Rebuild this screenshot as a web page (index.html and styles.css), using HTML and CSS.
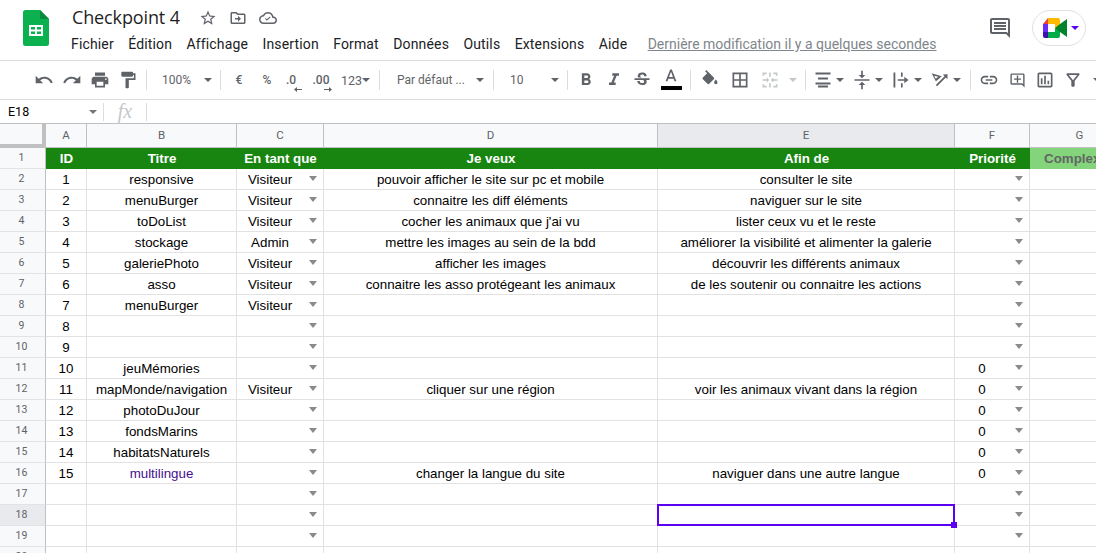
FILE: index.html
```html
<!DOCTYPE html>
<html lang="fr">
<head>
<meta charset="utf-8">
<title>Checkpoint 4</title>
<link rel="stylesheet" href="styles.css">
</head>
<body>
<header class="topbar">
  <svg class="logo" viewBox="0 0 26 36"><path fill="#0bb04f" d="M2.5 0H17l9 9v24.500a2.500 2.500 0 0 1-2.500 2.500h-21A2.500 2.500 0 0 1 0 33.500v-31A2.500 2.500 0 0 1 2.500 0z"/><path fill="#0a8a3f" d="M17 0l9 9h-9z"/><path fill="#fff" d="M6 15h14v11H6zm2 2v2.500h4V17zm6 0v2.500h4V17zM8 21.500V24h4v-2.500zm6 0V24h4v-2.500z"/></svg>
  <div class="docinfo">
    <div class="titlerow">
      <span class="doctitle">Checkpoint 4</span>
      <svg class="ic18" viewBox="0 0 24 24"><path d="M22 9.240l-7.190-.62L12 2 9.190 8.630 2 9.240l5.460 4.730L5.820 21 12 17.270 18.180 21l-1.630-7.030L22 9.240zM12 15.400l-3.760 2.270 1-4.280-3.320-2.880 4.380-.38L12 6.100l1.710 4.040 4.380.38-3.320 2.880 1 4.280L12 15.400z"/></svg>
      <svg class="ic18" viewBox="0 0 24 24"><path d="M20 6h-8l-2-2H4c-1.100 0-2 .9-2 2v12c0 1.100.9 2 2 2h16c1.100 0 2-.9 2-2V8c0-1.100-.9-2-2-2zm0 12H4V6h5.170l2 2H20v10zM12 17l4-4-4-4v3H8v2h4z"/></svg>
      <svg class="ic18" viewBox="0 0 24 24"><path d="M19.350 10.040C18.670 6.590 15.640 4 12 4 9.110 4 6.600 5.640 5.350 8.040 2.340 8.360 0 10.910 0 14c0 3.310 2.690 6 6 6h13c2.760 0 5-2.240 5-5 0-2.640-2.050-4.780-4.650-4.960zM19 18H6c-2.210 0-4-1.790-4-4 0-2.050 1.530-3.760 3.560-3.970l1.070-.11.5-.95C8.080 7.140 9.940 6 12 6c2.620 0 4.880 1.860 5.390 4.430l.3 1.500 1.530.11c1.560.1 2.780 1.410 2.780 2.960 0 1.650-1.350 3-3 3zm-8.500-2.500L8 13l1-1 1.500 1.500L14.500 10l1 1z"/></svg>
    </div>
    <nav class="menu">
      <span>Fichier</span><span>Édition</span><span>Affichage</span><span>Insertion</span><span>Format</span><span>Données</span><span>Outils</span><span>Extensions</span><span>Aide</span>
      <a class="lastedit">Dernière modification il y a quelques secondes</a>
    </nav>
  </div>
  <svg class="chat" viewBox="0 0 24 24"><path d="M21.990 4c0-1.100-.89-2-1.990-2H4c-1.100 0-2 .9-2 2v12c0 1.100.9 2 2 2h14l4 4-.01-18zM20 4v13.170L18.830 16H4V4h16zM6 12h12v2H6zm0-3h12v2H6zm0-3h12v2H6z"/></svg>
  <div class="meet">
    <svg class="meetlogo" viewBox="0 0 24 20"><path fill="#00ac47" d="M5 14h7v-4h5v8a2 2 0 0 1-2 2H5z"/><path fill="#ffba00" d="M5 0h10a2 2 0 0 1 2 2v8h-5V6H5z"/><path fill="#6a2cf5" d="M0 6h5v8H0z"/><path fill="#3f10b5" d="M0 14h5v6H2a2 2 0 0 1-2-2z"/><path fill="#ea4335" d="M5 0v6H0z"/><path fill="#00832d" d="M12 10l5-4 7-5v18l-7-5z"/></svg>
    <span class="meetarrow"></span>
  </div>
</header>

<div class="toolbar">
  <span class="b"><svg class="ic" viewBox="0 0 24 24"><path d="M12.500 8c-2.650 0-5.050.99-6.900 2.600L2 7v9h9l-3.620-3.620c1.390-1.160 3.160-1.880 5.120-1.880 3.540 0 6.550 2.310 7.600 5.500l2.370-.78C21.080 11.030 17.150 8 12.500 8z"/></svg></span>
  <span class="b"><svg class="ic" viewBox="0 0 24 24"><path d="M18.400 10.600C16.550 8.990 14.150 8 11.500 8c-4.650 0-8.580 3.030-9.960 7.220L3.900 16c1.050-3.190 4.050-5.500 7.600-5.500 1.950 0 3.730.72 5.120 1.880L13 16h9V7l-3.600 3.600z"/></svg></span>
  <span class="b"><svg class="ic" viewBox="0 0 24 24"><path d="M19 8H5c-1.660 0-3 1.340-3 3v6h4v4h12v-4h4v-6c0-1.660-1.340-3-3-3zm-3 11H8v-5h8v5zm3-7c-.55 0-1-.45-1-1s.45-1 1-1 1 .45 1 1-.45 1-1 1zm-1-9H6v4h12V3z"/></svg></span>
  <span class="b"><svg class="ic" viewBox="0 0 24 24"><path d="M18 4V3c0-.55-.45-1-1-1H5c-.55 0-1 .45-1 1v4c0 .55.45 1 1 1h12c.55 0 1-.45 1-1V6h1v4H9v11c0 .55.45 1 1 1h2c.55 0 1-.45 1-1v-9h8V4h-3z"/></svg></span>
  <i class="sep"></i>
  <span class="sel zoomsel"><span>100%</span><i class="arr"></i></span>
  <i class="sep"></i>
  <span class="b txt">€</span>
  <span class="b txt">%</span>
  <span class="dec dec1"><span>.0</span><svg viewBox="0 0 8 5"><path d="M0 2.500L3 0v2h5v1H3v2z"/></svg></span>
  <span class="dec dec2"><span>.00</span><svg viewBox="0 0 8 5"><path d="M8 2.500L5 0v2H0v1h5v2z"/></svg></span>
  <span class="sel numsel"><span>123</span><i class="arr"></i></span>
  <i class="sep"></i>
  <span class="sel fontsel"><span>Par défaut ...</span><i class="arr"></i></span>
  <i class="sep"></i>
  <span class="sel sizesel"><span>10</span><i class="arr"></i></span>
  <i class="sep"></i>
  <span class="b"><svg class="ic" viewBox="0 0 24 24"><path d="M15.600 10.790c.97-.67 1.650-1.770 1.650-2.790 0-2.260-1.750-4-4-4H7v14h7.040c2.090 0 3.710-1.700 3.710-3.790 0-1.520-.86-2.820-2.150-3.420zM10 6.500h3c.83 0 1.500.67 1.500 1.500s-.67 1.500-1.500 1.500h-3v-3zm3.500 9H10v-3h3.500c.83 0 1.500.67 1.500 1.500s-.67 1.500-1.500 1.500z"/></svg></span>
  <span class="b"><svg class="ic" viewBox="0 0 24 24"><path d="M10 4v3h2.210l-3.420 8H6v3h8v-3h-2.210l3.420-8H18V4z"/></svg></span>
  <span class="b"><svg class="ic" viewBox="0 0 24 24"><path d="M6.850 7.080C6.850 4.370 9.450 3 12.240 3c1.640 0 3 .49 3.900 1.280.77.65 1.460 1.730 1.460 3.240h-3.010c0-.31-.05-.59-.15-.85-.29-.86-1.200-1.280-2.250-1.280-1.860 0-2.340 1.020-2.340 1.700 0 .48.25.88.74 1.210.38.25.77.48 1.410.7H7.390c-.21-.34-.54-.89-.54-1.920zM21 12v-2H3v2h9.620c1.150.45 1.960.75 1.960 1.970 0 1-.81 1.670-2.280 1.670-1.540 0-2.930-.54-2.930-2.510H6.400c0 .55.08 1.130.24 1.580.81 2.290 3.290 3.300 5.670 3.300 2.270 0 5.300-.89 5.300-4.050 0-.3-.01-1.160-.48-1.940H21V12z"/></svg></span>
  <span class="b wide colorbtn"><svg class="ic" viewBox="0 0 24 24"><path d="M11 3L5.500 17h2.250l1.120-3h6.250l1.120 3h2.250L13 3h-2zm-1.380 9L12 5.670 14.380 12H9.620z"/></svg><i class="colorbar"></i></span>
  <i class="sep"></i>
  <span class="b wide"><svg class="ic" viewBox="0 0 24 24"><path d="M16.560 8.940L7.620 0 6.210 1.410l2.380 2.380-5.150 5.150c-.59.59-.59 1.540 0 2.120l5.500 5.500c.29.29.68.44 1.060.44s.77-.15 1.060-.44l5.500-5.500c.59-.58.59-1.530 0-2.120zM19 11.500s-2 2.170-2 3.500c0 1.100.9 2 2 2s2-.9 2-2c0-1.330-2-3.500-2-3.500z"/></svg></span>
  <span class="b wide"><svg class="ic" viewBox="0 0 24 24"><path d="M3 3v18h18V3H3zm8 16H5v-6h6v6zm0-8H5V5h6v6zm8 8h-6v-6h6v6zm0-8h-6V5h6v6z"/></svg></span>
  <span class="b wide dim"><svg class="ic" viewBox="0 0 24 24"><path d="M3 3h5v2H5v2H3zm13 0h5v4h-2V5h-3zM3 17h2v2h3v2H3zm16 0h2v4h-5v-2h3zM11 3h2v5h-2zm0 13h2v5h-2zM3 11h5V9l3 3-3 3v-2H3zm18 0h-5V9l-3 3 3 3v-2h5z"/></svg></span>
  <span class="loosearr"><i class="arr off"></i></span>
  <i class="sep"></i>
  <span class="ba"><svg class="ic" viewBox="0 0 24 24"><path d="M3 3h18v2.500H3zm3 6h12v2.500H6zm-3 6h18v2.500H3zm3 3.500h12V21H6z"/></svg><i class="arr"></i></span>
  <span class="ba"><svg class="ic" viewBox="0 0 24 24"><path d="M3 11h18v2H3zm9-1L8 6h3V1h2v5h3zm0 4l4 4h-3v5h-2v-5H8z"/></svg><i class="arr"></i></span>
  <span class="ba"><svg class="ic" viewBox="0 0 24 24"><path d="M3 3h2.200v18H3zm9 0h2v5h-2zm0 13h2v5h-2zM8 11h8V8l5 4-5 4v-3H8z"/></svg><i class="arr"></i></span>
  <span class="ba"><svg class="ic" viewBox="0 0 24 24"><path d="M2 4l12 3.500L9 12l-2 1.500zm3 3l1.800 3.500L10 8zM21 5v6l-2-2L8.500 19.500 7 18 17.500 7.500l-2-2z"/></svg><i class="arr"></i></span>
  <i class="sep"></i>
  <span class="b"><svg class="ic" viewBox="0 0 24 24"><path d="M3.900 12c0-1.710 1.390-3.100 3.100-3.100h4V7H7c-2.760 0-5 2.240-5 5s2.240 5 5 5h4v-1.900H7c-1.710 0-3.100-1.390-3.100-3.100zM8 13h8v-2H8v2zm9-6h-4v1.900h4c1.710 0 3.100 1.390 3.100 3.100s-1.390 3.100-3.100 3.100h-4V17h4c2.760 0 5-2.240 5-5s-2.240-5-5-5z"/></svg></span>
  <span class="b"><svg class="ic small" viewBox="0 0 24 24"><path d="M22 4c0-1.100-.9-2-2-2H4c-1.100 0-2 .9-2 2v12c0 1.100.9 2 2 2h14l4 4V4zm-2 13.170L18.830 16H4V4h16v13.170zM13 5h-2v4H7v2h4v4h2v-4h4V9h-4z"/></svg></span>
  <span class="b"><svg class="ic" viewBox="0 0 24 24"><path d="M19 3H5c-1.100 0-2 .9-2 2v14c0 1.100.9 2 2 2h14c1.100 0 2-.9 2-2V5c0-1.100-.9-2-2-2zm0 16H5V5h14v14zM7 10h2v7H7zm4-3h2v10h-2zm4 6h2v4h-2z"/></svg></span>
  <span class="b"><svg class="ic" viewBox="0 0 24 24"><path d="M7 6h10l-5.010 6.300L7 6zm-2.750-.39C6.270 8.200 10 13 10 13v6c0 .55.45 1 1 1h2c.55 0 1-.45 1-1v-6s3.720-4.800 5.740-7.390c.51-.66.04-1.610-.79-1.610H5.040c-.83 0-1.300.95-.79 1.610z"/></svg></span>
  <span class="loosearr last"><i class="arr"></i></span>
</div>

<div class="formulabar">
  <span class="namebox">E18</span>
  <i class="arr"></i>
  <i class="fsep"></i>
  <span class="fx">fx</span>
  <i class="fsep"></i>
</div>

<main class="sheet">
  <div class="corner"></div>
  <div class="ch">A</div><div class="ch">B</div><div class="ch">C</div><div class="ch">D</div><div class="ch on">E</div><div class="ch">F</div><div class="ch">G</div>

  <div class="rh">1</div><div class="h">ID</div><div class="h">Titre</div><div class="h">En tant que</div><div class="h">Je veux</div><div class="h">Afin de</div><div class="h">Priorité</div><div class="h soft">Complexité</div>

  <div class="rh">2</div><div class="c">1</div><div class="c">responsive</div><div class="c dd">Visiteur</div><div class="c">pouvoir afficher le site sur pc et mobile</div><div class="c">consulter le site</div><div class="c dd"></div><div class="c"></div>
  <div class="rh">3</div><div class="c">2</div><div class="c">menuBurger</div><div class="c dd">Visiteur</div><div class="c">connaitre les diff éléments</div><div class="c">naviguer sur le site</div><div class="c dd"></div><div class="c"></div>
  <div class="rh">4</div><div class="c">3</div><div class="c">toDoList</div><div class="c dd">Visiteur</div><div class="c">cocher les animaux que j'ai vu</div><div class="c">lister ceux vu et le reste</div><div class="c dd"></div><div class="c"></div>
  <div class="rh">5</div><div class="c">4</div><div class="c">stockage</div><div class="c dd">Admin</div><div class="c">mettre les images au sein de la bdd</div><div class="c">améliorer la visibilité et alimenter la galerie</div><div class="c dd"></div><div class="c"></div>
  <div class="rh">6</div><div class="c">5</div><div class="c">galeriePhoto</div><div class="c dd">Visiteur</div><div class="c">afficher les images</div><div class="c">découvrir les différents animaux</div><div class="c dd"></div><div class="c"></div>
  <div class="rh">7</div><div class="c">6</div><div class="c">asso</div><div class="c dd">Visiteur</div><div class="c">connaitre les asso protégeant les animaux</div><div class="c">de les soutenir ou connaitre les actions</div><div class="c dd"></div><div class="c"></div>
  <div class="rh">8</div><div class="c">7</div><div class="c">menuBurger</div><div class="c dd">Visiteur</div><div class="c"></div><div class="c"></div><div class="c dd"></div><div class="c"></div>
  <div class="rh">9</div><div class="c">8</div><div class="c"></div><div class="c dd"></div><div class="c"></div><div class="c"></div><div class="c dd"></div><div class="c"></div>
  <div class="rh">10</div><div class="c">9</div><div class="c"></div><div class="c dd"></div><div class="c"></div><div class="c"></div><div class="c dd"></div><div class="c"></div>
  <div class="rh">11</div><div class="c">10</div><div class="c">jeuMémories</div><div class="c dd"></div><div class="c"></div><div class="c"></div><div class="c dd">0</div><div class="c"></div>
  <div class="rh">12</div><div class="c">11</div><div class="c">mapMonde/navigation</div><div class="c dd">Visiteur</div><div class="c">cliquer sur une région</div><div class="c">voir les animaux vivant dans la région</div><div class="c dd">0</div><div class="c"></div>
  <div class="rh">13</div><div class="c">12</div><div class="c">photoDuJour</div><div class="c dd"></div><div class="c"></div><div class="c"></div><div class="c dd">0</div><div class="c"></div>
  <div class="rh">14</div><div class="c">13</div><div class="c">fondsMarins</div><div class="c dd"></div><div class="c"></div><div class="c"></div><div class="c dd">0</div><div class="c"></div>
  <div class="rh">15</div><div class="c">14</div><div class="c">habitatsNaturels</div><div class="c dd"></div><div class="c"></div><div class="c"></div><div class="c dd">0</div><div class="c"></div>
  <div class="rh">16</div><div class="c">15</div><div class="c purple">multilingue</div><div class="c dd"></div><div class="c">changer la langue du site</div><div class="c">naviguer dans une autre langue</div><div class="c dd">0</div><div class="c"></div>
  <div class="rh">17</div><div class="c"></div><div class="c"></div><div class="c dd"></div><div class="c"></div><div class="c"></div><div class="c dd"></div><div class="c"></div>
  <div class="rh on">18</div><div class="c"></div><div class="c"></div><div class="c dd"></div><div class="c"></div><div class="c active"><i class="handle"></i></div><div class="c dd"></div><div class="c"></div>
  <div class="rh">19</div><div class="c"></div><div class="c"></div><div class="c dd"></div><div class="c"></div><div class="c"></div><div class="c dd"></div><div class="c"></div>
  <div class="rh">20</div><div class="c"></div><div class="c"></div><div class="c"></div><div class="c"></div><div class="c"></div><div class="c"></div><div class="c"></div>
</main>
</body>
</html>
```

FILE: styles.css
```css
* { box-sizing: border-box; }
html, body { margin: 0; padding: 0; }
body {
  width: 1096px;
  height: 553px;
  overflow: hidden;
  background: #fff;
  font-family: Roboto, "Liberation Sans", sans-serif;
  color: #000;
}
svg { display: block; fill: #5f6368; flex: none; }

.topbar {
  height: 61px;
  border-bottom: 1px solid #dadce0;
  display: flex;
  align-items: flex-start;
  padding-left: 23px;
}
.logo { width: 26px; height: 36px; margin-top: 10px; }
.docinfo { margin-left: 22px; width: 917px; padding-top: 5px; }
.titlerow { display: flex; align-items: center; height: 25px; padding-left: 1px; }
.doctitle {
  font-family: "Open Sans", Roboto, sans-serif;
  font-size: 18px;
  line-height: 25px;
  color: #1f1f1f;
  margin-right: 19px;
  letter-spacing: -.13px;
}
.ic18 { width: 18px; height: 18px; margin-right: 12px; }
.menu {
  display: flex;
  gap: 14.400px;
  font-size: 14px;
  line-height: 20px;
  color: #202124;
  margin-top: 4px;
  letter-spacing: .15px;
  white-space: nowrap;
}
.lastedit { margin-left: 6px; color: #80868b; text-decoration: underline; letter-spacing: 0; }
.chat { width: 24px; height: 24px; margin: 16px 0 0 0; }
.meet {
  width: 54px;
  height: 36px;
  margin: 10px 0 0 20px;
  border: 1px solid #e0e0e0;
  border-radius: 18px;
  display: flex;
  align-items: center;
  padding-left: 10px;
}
.meetlogo { width: 24px; height: 20px; }
.meetarrow {
  margin-left: 4px;
  border-left: 4px solid transparent;
  border-right: 4px solid transparent;
  border-top: 4px solid #5c00f2;
}

.toolbar {
  height: 39px;
  border-bottom: 1px solid #dadce0;
  display: flex;
  align-items: center;
  padding-left: 30px;
  overflow: hidden;
  color: #5f6368;
  font-size: 12px;
  white-space: nowrap;
}
.b { width: 28px; height: 28px; display: flex; align-items: center; justify-content: center; flex: none; }
.wide { width: 30px; }
.ic { width: 20px; height: 20px; }
.ic.small { width: 17px; height: 17px; }
.txt { font-weight: 500; }
.sep { width: 1px; height: 20px; background: #dadce0; margin: 0 4px; flex: none; }
.arr {
  display: block;
  width: 0;
  height: 0;
  flex: none;
  border-left: 4px solid transparent;
  border-right: 4px solid transparent;
  border-top: 4px solid #5f6368;
}
.arr.off { border-top-color: #c4c7c9; }
.sel { display: flex; align-items: center; justify-content: space-between; flex: none; height: 28px; }
.zoomsel { width: 65px; padding: 0 4px 0 11px; }
.numsel { width: 34px; justify-content: flex-start; font-size: 12.500px; }
.fontsel { width: 105px; padding: 0 5px 0 13px; }
.sizesel { width: 65px; padding: 0 4px 0 12px; }
.dec {
  display: flex;
  flex-direction: column;
  align-items: center;
  flex: none;
  font-weight: 500;
  line-height: 13px;
  padding-top: 6px;
}
.dec svg { width: 8px; height: 5px; margin-left: 14px; }
.dec1 { width: 20px; }
.dec2 { width: 40px; }
.dim svg { fill: #c4c7c9; }
.colorbtn { flex-direction: column; justify-content: flex-start; padding-top: 1px; }
.colorbar { display: block; width: 21px; height: 4px; background: #000; margin-top: -1px; }
.loosearr { width: 16px; display: flex; justify-content: center; flex: none; }
.loosearr.last { margin-left: 0; width: 20px; }
.ba { width: 39px; padding-left: 3px; display: flex; align-items: center; flex: none; height: 28px; }
.ba .arr { margin-left: 3px; }

.formulabar {
  height: 24px;
  border-bottom: 1px solid #c0c0c0;
  display: flex;
  align-items: center;
}
.namebox { width: 89px; padding-left: 8px; font-size: 12.500px; color: #000; }
.fsep { width: 1px; height: 18px; background: #dadce0; }
.formulabar .arr { border-top-color: #757575; margin-right: 6px; }
.fx {
  width: 42px;
  text-align: center;
  font-family: "Liberation Serif", serif;
  font-style: italic;
  font-size: 20px;
  color: #c4c7c9;
}

.sheet {
  display: grid;
  grid-template-columns: 46px 41px 150px 87px 334px 297px 75px 100px;
  grid-template-rows: 24px;
  grid-auto-rows: 21px;
  width: 1096px;
  height: 429px;
  overflow: hidden;
  font-family: "Liberation Sans", Arial, sans-serif;
  font-size: 13.330px;
  color: #000;
}
.corner {
  background: #f8f9fa;
  border-right: 4px solid #c0c0c0;
  border-bottom: 4px solid #c0c0c0;
}
.ch, .rh {
  font-family: Roboto, sans-serif;
  font-size: 10.500px;
  color: #5f6368;
  background: #f8f9fa;
  display: flex;
  align-items: center;
  justify-content: center;
}
.ch { border-right: 1px solid #c0c0c0; border-bottom: 1px solid #c0c0c0; padding-bottom: 1px; font-size: 11.500px; }
.rh { border-right: 1px solid #c0c0c0; border-bottom: 1px solid #e2e3e5; padding: 0 2px 2px 0; }
.on { background: #e8eaed; }
.h {
  background: #188510;
  color: #fff;
  font-weight: 700;
  display: flex;
  align-items: center;
  justify-content: center;
  white-space: nowrap;
}
.soft { background: #83d47b; color: #656565; overflow: visible; }
.c {
  position: relative;
  border-right: 1px solid #e2e2e2;
  border-bottom: 1px solid #e2e2e2;
  display: flex;
  align-items: center;
  justify-content: center;
  white-space: nowrap;
  padding-top: 1px;
}
.dd { padding-right: 20px; }
.dd::after {
  content: "";
  position: absolute;
  right: 6px;
  top: 7px;
  border-left: 4.500px solid transparent;
  border-right: 4.500px solid transparent;
  border-top: 5px solid #8a8a8a;
}
.purple { color: #46108f; }
.active::before {
  content: "";
  position: absolute;
  left: -1px;
  top: -1px;
  right: -1px;
  bottom: -1px;
  border: 2px solid #5c00f2;
  z-index: 2;
}
.handle {
  position: absolute;
  right: -3px;
  bottom: -3px;
  width: 6px;
  height: 6px;
  background: #5c00f2;
  z-index: 3;
}
```
